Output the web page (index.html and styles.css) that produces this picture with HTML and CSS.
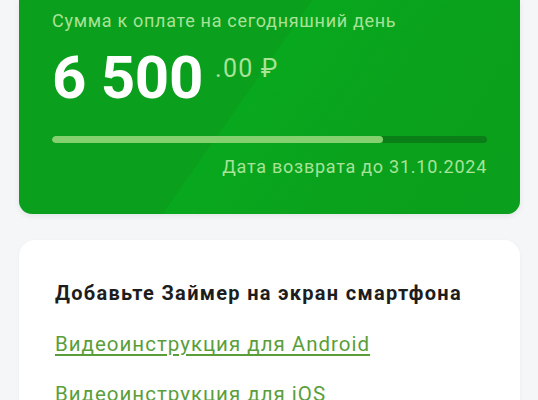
FILE: index.html
```html
<!DOCTYPE html>
<html lang="ru">
<head>
<meta charset="utf-8">
<link rel="stylesheet" href="styles.css">
</head>
<body>
<main class="page">
  <section class="pay-card">
    <p class="pay-label">Сумма к оплате на сегодняшний день</p>
    <div class="amount">
      <span class="amount-main">6 500</span>
      <span class="amount-sub">.00 ₽</span>
    </div>
    <div class="progress"><div class="progress-fill" style="width: 76%"></div></div>
    <p class="due">Дата возврата до 31.10.2024</p>
  </section>
  <section class="info-card">
    <h2 class="info-title">Добавьте Займер на экран смартфона</h2>
    <a class="info-link" href="#">Видеоинструкция для Android</a>
    <a class="info-link" href="#">Видеоинструкция для iOS</a>
  </section>
</main>
</body>
</html>
```
FILE: styles.css
```css
* { box-sizing: border-box; }
html, body { margin: 0; padding: 0; }
body {
  background: #f5f6f8;
  font-family: Roboto, "Noto Sans", sans-serif;
  width: 538px;
  height: 400px;
  overflow: hidden;
}
.page {
  padding: 0 18px 0 19px;
  display: flex;
  flex-direction: column;
  gap: 26px;
}
.pay-card {
  background: linear-gradient(125deg, #0a9f1c 0%, #0a9f1c 45%, #08a81e 45.2%, #0aa11c 70%, #0a9f1c 100%);
  background-color: #0a9f1c;
  border-radius: 0 0 13px 13px;
  padding: 10px 33px 0 33px;
  height: 214px;
  box-shadow: 0 2px 6px rgba(0,0,0,0.08);
}
.pay-label {
  margin: 0;
  color: #a7e398;
  font-size: 18px;
  line-height: 21px;
  letter-spacing: 0.7px;
}
.amount {
  margin-top: 17px;
  display: flex;
  align-items: flex-start;
  gap: 12px;
}
.amount-main {
  color: #ffffff;
  font-weight: 700;
  font-size: 60px;
  line-height: 60px;
  letter-spacing: -0.3px;
}
.amount-sub {
  color: #a7e398;
  font-size: 25px;
  line-height: 25px;
  letter-spacing: 1.2px;
  margin-top: 8px;
}
.progress {
  margin-top: 28px;
  height: 7px;
  border-radius: 4px;
  background: #0b7f17;
  overflow: hidden;
}
.progress-fill {
  height: 100%;
  border-radius: 4px;
  background: #86d16f;
}
.due {
  margin: 13px 0 0 0;
  text-align: right;
  color: #a7e398;
  font-size: 18px;
  line-height: 21px;
  letter-spacing: 0.75px;
}
.info-card {
  background: #ffffff;
  border-radius: 16px;
  padding: 41px 36px 20px 36px;
  height: 200px;
  display: flex;
  flex-direction: column;
  align-items: flex-start;
  box-shadow: 0 1px 4px rgba(0,0,0,0.04);
}
.info-title {
  margin: 0;
  font-size: 20px;
  font-weight: 700;
  line-height: 24px;
  letter-spacing: 1.3px;
  color: #1d1d1d;
}
.info-link {
  margin-top: 27px;
  color: #5a9e3a;
  font-size: 20.5px;
  line-height: 24px;
  letter-spacing: 1px;
  text-decoration: underline;
  text-underline-offset: 3px;
}
.info-link + .info-link { margin-top: 26px; }
```
